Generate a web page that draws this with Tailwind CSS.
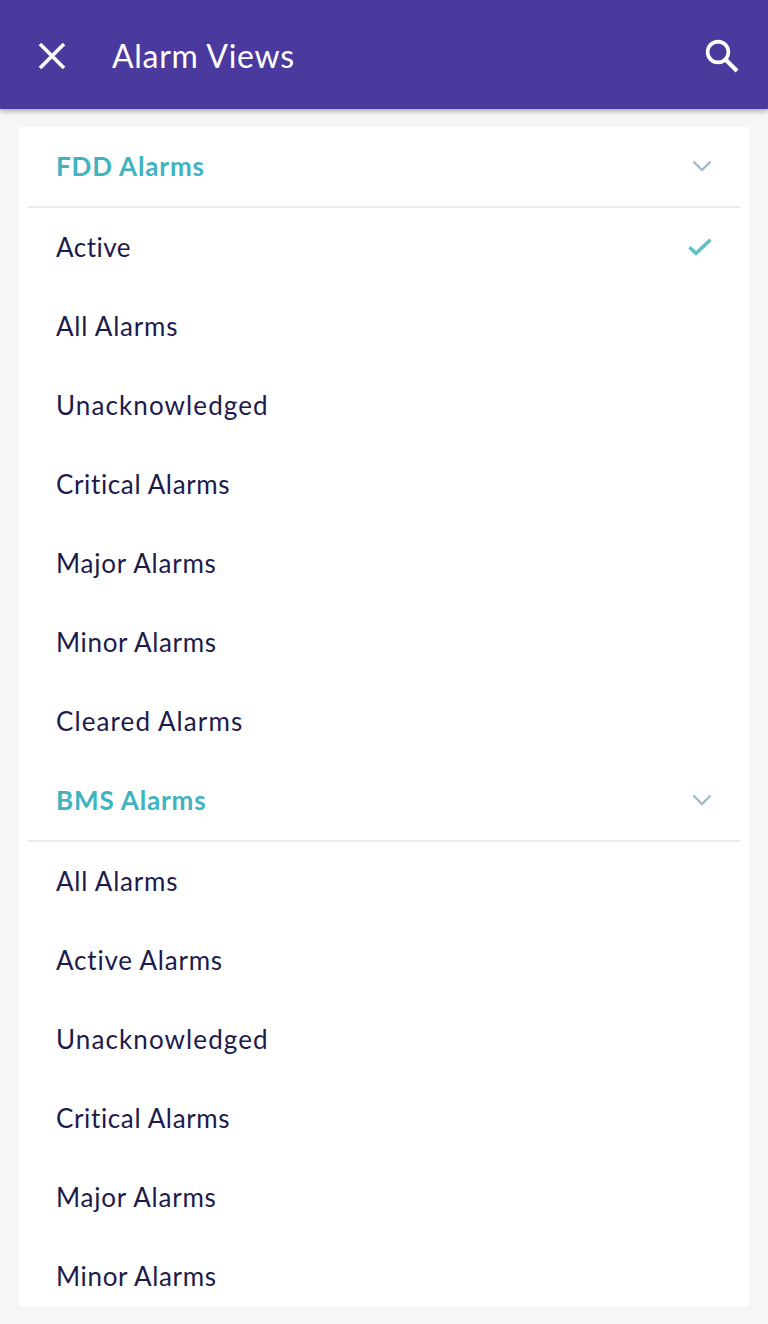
<!DOCTYPE html>
<html lang="en">

<head>
    <meta charset="UTF-8">
    <title>Alarm Views</title>
    <script src="https://cdn.jsdelivr.net/npm/@tailwindcss/browser@4"></script>
</head>

<body class="h-[1324px] overflow-hidden flex flex-col bg-[#f4f6f8] font-['Lato','Open_Sans',sans-serif] text-[26px] text-[#1d1b4c]">
    <header class="relative h-[109px] shrink-0 flex items-center pl-[37px] pr-[28px] bg-[#4a3a9e] text-white shadow-[0_1px_6px_rgba(0,0,0,0.45)]">
        <button class="mt-[3px]" aria-label="Close">
            <svg class="w-[30px] h-[30px]" viewBox="0 0 30 30" fill="none" stroke="currentColor" stroke-width="3.6">
                <path d="M3 3 27 27M27 3 3 27" />
            </svg>
        </button>
        <h1 class="ml-[45px] mt-[2px] text-[32px] tracking-[0.7px]">Alarm Views</h1>
        <button class="ml-auto mt-[3px]" aria-label="Search">
            <svg class="w-[36px] h-[36px]" viewBox="0 0 36 36" fill="none" stroke="currentColor">
                <circle cx="14" cy="14" r="10.4" stroke-width="3.6" />
                <path d="M21.5 21.5 33 33" stroke-width="4.2" />
            </svg>
        </button>
    </header>

    <main class="mt-[18px] mx-[19px] h-[1179px] overflow-hidden bg-white">
        <section>
            <div class="mx-[9px] px-[28px] h-[81px] flex items-center justify-between border-b-2 border-[#ebebed]">
                <h2 class="font-bold tracking-[0.85px] text-[#3fb3c0]">FDD Alarms</h2>
                <svg class="w-[20px] h-[12px] -mt-[2px]" viewBox="0 0 20 12" fill="none" stroke="#a0bbc8" stroke-width="2.4">
                    <path d="M1.5 1.5 10 10 18.5 1.5" />
                </svg>
            </div>
            <ul class="px-[37px] tracking-[0.8px]">
                <li class="h-[79px] flex items-center justify-between">
                    <span class="tracking-[0.5px]">Active</span>
                    <svg class="w-[24px] h-[18px] -mt-[2px]" viewBox="0 0 24 18" fill="none" stroke="#5fc0c6" stroke-width="3.4">
                        <path d="M1.5 9.2 8 15.3 22.5 1.8" />
                    </svg>
                </li>
                <li class="h-[79px] flex items-center"><span>All Alarms</span></li>
                <li class="h-[79px] flex items-center"><span class="tracking-[1.1px]">Unacknowledged</span></li>
                <li class="h-[79px] flex items-center"><span class="tracking-[0.65px]">Critical Alarms</span></li>
                <li class="h-[79px] flex items-center"><span>Major Alarms</span></li>
                <li class="h-[79px] flex items-center"><span class="tracking-[0.65px]">Minor Alarms</span></li>
                <li class="h-[79px] flex items-center"><span class="tracking-[1.1px]">Cleared Alarms</span></li>
            </ul>
        </section>
        <section>
            <div class="mx-[9px] px-[28px] h-[81px] flex items-center justify-between border-b-2 border-[#ebebed]">
                <h2 class="font-bold tracking-[0.85px] text-[#3fb3c0]">BMS Alarms</h2>
                <svg class="w-[20px] h-[12px] -mt-[2px]" viewBox="0 0 20 12" fill="none" stroke="#a0bbc8" stroke-width="2.4">
                    <path d="M1.5 1.5 10 10 18.5 1.5" />
                </svg>
            </div>
            <ul class="px-[37px] tracking-[0.8px]">
                <li class="h-[79px] flex items-center"><span>All Alarms</span></li>
                <li class="h-[79px] flex items-center"><span>Active Alarms</span></li>
                <li class="h-[79px] flex items-center"><span class="tracking-[1.1px]">Unacknowledged</span></li>
                <li class="h-[79px] flex items-center"><span class="tracking-[0.65px]">Critical Alarms</span></li>
                <li class="h-[79px] flex items-center"><span>Major Alarms</span></li>
                <li class="h-[79px] flex items-center"><span class="tracking-[0.65px]">Minor Alarms</span></li>
            </ul>
        </section>
    </main>
</body>

</html>
